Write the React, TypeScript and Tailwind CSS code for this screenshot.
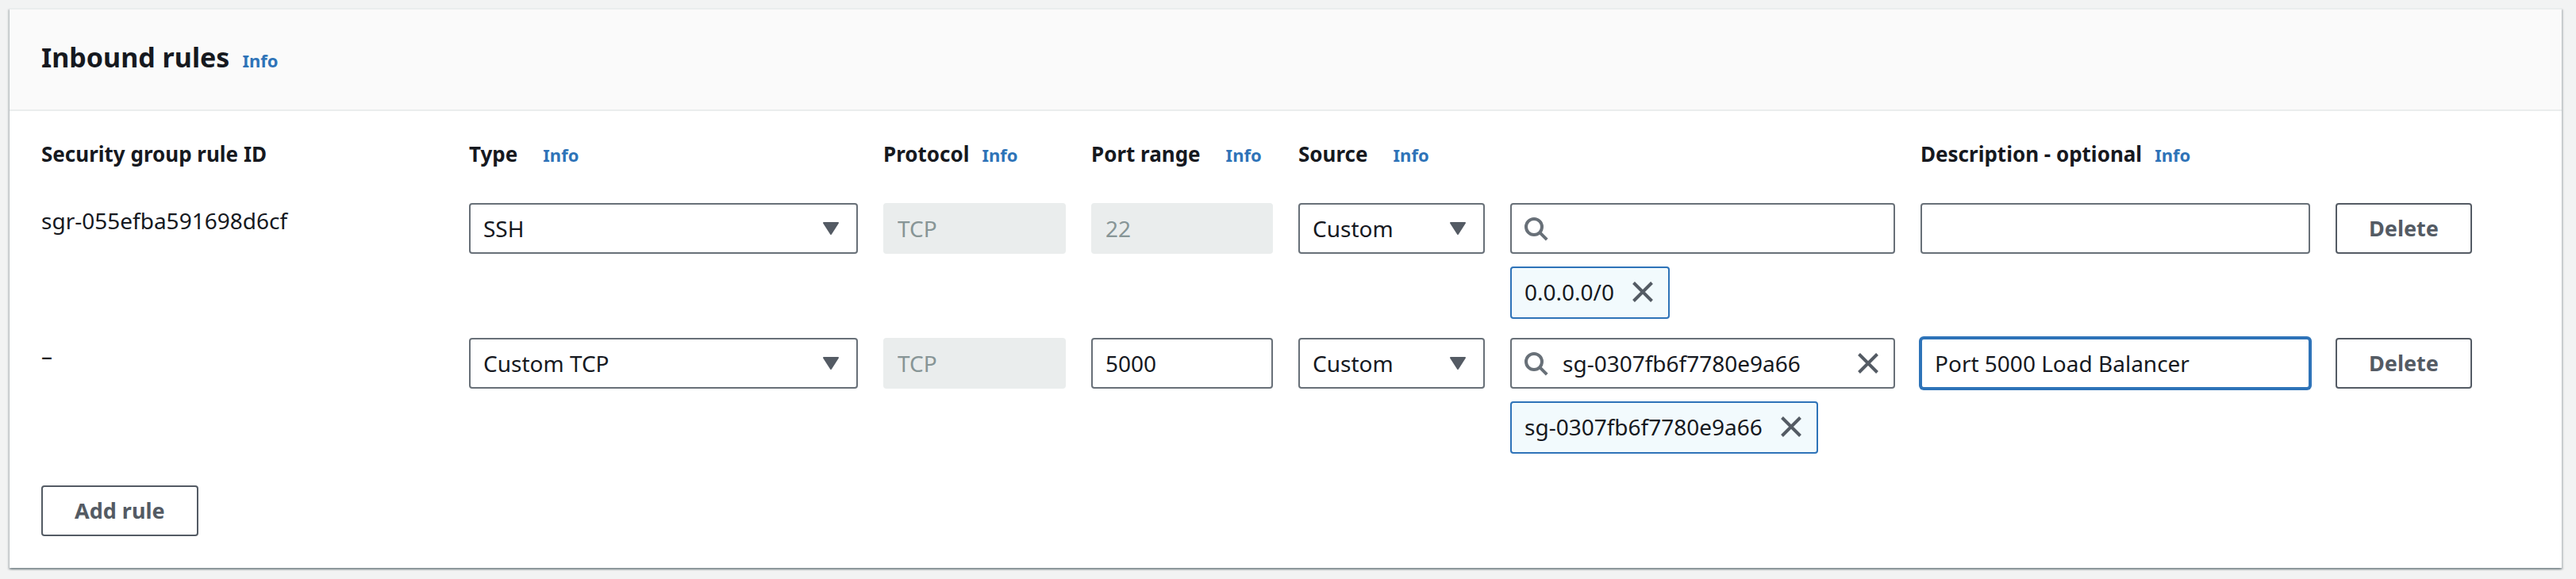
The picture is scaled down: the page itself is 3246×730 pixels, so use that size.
import type { ReactNode } from "react";

type Rule = {
  id: string;
  type: string;
  port: string;
  portLocked: boolean;
  source: string;
  query: string;
  token: string;
  description: string;
  focused: boolean;
};

const rules: Rule[] = [
  {
    id: "sgr-055efba591698d6cf",
    type: "SSH",
    port: "22",
    portLocked: true,
    source: "Custom",
    query: "",
    token: "0.0.0.0/0",
    description: "",
    focused: false,
  },
  {
    id: "–",
    type: "Custom TCP",
    port: "5000",
    portLocked: false,
    source: "Custom",
    query: "sg-0307fb6f7780e9a66",
    token: "sg-0307fb6f7780e9a66",
    description: "Port 5000 Load Balancer",
    focused: true,
  },
];

const rowGrid =
  "grid gap-x-8 grid-cols-[minmax(0,507fr)_minmax(0,490fr)_minmax(0,230fr)_minmax(0,229fr)_minmax(0,235fr)_minmax(0,485fr)_minmax(0,491fr)_minmax(0,245fr)]";

const fieldBase = "h-16 w-full min-w-0 rounded-sm border-2 px-4 text-[28px] leading-[40px] outline-none";
const fieldNormal = "border-[#687078] bg-white text-[#16191f]";
const fieldLocked = "border-[#eaeded] bg-[#eaeded] text-[#879596]";
const fieldFocused = "border-[#2e73b8] bg-white text-[#16191f] ring-2 ring-[#2e73b8]";

function InfoLink() {
  return (
    <a href="#info" className="text-[22px] leading-none font-bold text-[#2e73b8]">
      Info
    </a>
  );
}

function HeadCell({ id, children, info, wide }: { id: string; children: ReactNode; info?: boolean; wide?: boolean }) {
  return (
    <th
      scope="col"
      className={`flex items-baseline whitespace-nowrap text-left text-[26px] leading-[44px] font-bold ${wide ? "gap-8" : "gap-4"}`}
    >
      <span id={id}>{children}</span>
      {info && <InfoLink />}
    </th>
  );
}

function CloseIcon() {
  return (
    <svg viewBox="0 0 32 32" className="size-8" fill="none" stroke="#545b64" strokeWidth="4" aria-hidden="true">
      <path d="M4.5 4.5l23 23M27.5 4.5l-23 23" />
    </svg>
  );
}

function SearchIcon() {
  return (
    <svg viewBox="0 0 32 32" className="size-8 shrink-0" fill="none" stroke="#687078" strokeWidth="4" aria-hidden="true">
      <circle cx="12" cy="14" r="10" />
      <path d="M19.2 21.2l9 9" />
    </svg>
  );
}

function Select({ labelledBy, value }: { labelledBy: string; value: string }) {
  return (
    <div className="relative">
      <select
        aria-labelledby={labelledBy}
        defaultValue={value}
        className={`block appearance-none pr-14 ${fieldBase} ${fieldNormal}`}
      >
        <option>{value}</option>
      </select>
      <svg
        viewBox="0 0 20 16"
        className="pointer-events-none absolute top-6 right-6 h-4 w-5"
        fill="#545b64"
        stroke="#545b64"
        strokeWidth="2"
        strokeLinejoin="round"
        aria-hidden="true"
      >
        <path d="M1 1h18l-9 14z" />
      </svg>
    </div>
  );
}

function Button({ children }: { children: ReactNode }) {
  return (
    <button
      type="button"
      className="block h-16 rounded-sm border-2 border-[#545b64] bg-white px-10 text-[27px] leading-[40px] font-bold whitespace-nowrap text-[#545b64]"
    >
      {children}
    </button>
  );
}

function RuleRow({ rule }: { rule: Rule }) {
  return (
    <tr className={rowGrid}>
      <td className="text-[28px] leading-[44px]">{rule.id}</td>
      <td>
        <Select labelledBy="col-type" value={rule.type} />
      </td>
      <td>
        <input
          aria-labelledby="col-protocol"
          disabled
          defaultValue="TCP"
          className={`block ${fieldBase} ${fieldLocked}`}
        />
      </td>
      <td>
        <input
          aria-labelledby="col-port"
          disabled={rule.portLocked}
          defaultValue={rule.port}
          className={`block ${fieldBase} ${rule.portLocked ? fieldLocked : fieldNormal}`}
        />
      </td>
      <td>
        <Select labelledBy="col-source" value={rule.source} />
      </td>
      <td className="flex flex-col items-start gap-4">
        <div className="flex h-16 w-full items-center rounded-sm border-2 border-[#687078] bg-white px-4">
          <SearchIcon />
          <input
            aria-label="Search source"
            defaultValue={rule.query}
            className="ml-4 min-w-0 flex-1 text-[28px] leading-[40px] outline-none"
          />
          {rule.query && (
            <button type="button" aria-label="Clear search">
              <CloseIcon />
            </button>
          )}
        </div>
        <div className="flex items-center gap-5 rounded-sm border-2 border-[#2e73b8] bg-[#f2fafd] px-4 pt-2 pb-2.5 text-[28px] leading-[44px]">
          <span>{rule.token}</span>
          <button type="button" aria-label={`Remove ${rule.token}`}>
            <CloseIcon />
          </button>
        </div>
      </td>
      <td>
        <input
          aria-labelledby="col-description"
          defaultValue={rule.description}
          className={`block ${fieldBase} ${rule.focused ? fieldFocused : fieldNormal}`}
        />
      </td>
      <td>
        <Button>Delete</Button>
      </td>
    </tr>
  );
}

export default function App() {
  return (
    <main className="min-h-screen bg-[#f2f3f3] pt-2.5 pr-[18px] pb-3.5 pl-3 font-['Noto_Sans',sans-serif] text-[#16191f]">
      <section
        aria-labelledby="inbound-title"
        className="border-t-2 border-[#eaeded] bg-white shadow-[0_2px_2px_0_rgba(0,28,36,0.3),2px_2px_2px_0_rgba(0,28,36,0.15),-2px_2px_2px_0_rgba(0,28,36,0.15)]"
      >
        <header className="flex items-baseline gap-4 border-b-2 border-[#eaeded] bg-[#fafafa] px-10 pt-[38px] pb-11">
          <h2 id="inbound-title" className="text-[34px] leading-[44px] font-bold">
            Inbound rules
          </h2>
          <InfoLink />
        </header>
        <div className="px-10 pt-8 pb-10">
          <table className="block">
            <thead className="block">
              <tr className={rowGrid}>
                <HeadCell id="col-id">Security group rule ID</HeadCell>
                <HeadCell id="col-type" info wide>Type</HeadCell>
                <HeadCell id="col-protocol" info>Protocol</HeadCell>
                <HeadCell id="col-port" info wide>Port range</HeadCell>
                <HeadCell id="col-source" info wide>Source</HeadCell>
                <td />
                <HeadCell id="col-description" info>Description - optional</HeadCell>
                <td />
              </tr>
            </thead>
            <tbody className="mt-10 flex flex-col gap-6">
              {rules.map((rule) => (
                <RuleRow key={rule.id} rule={rule} />
              ))}
            </tbody>
          </table>
          <div className="mt-10">
            <Button>Add rule</Button>
          </div>
        </div>
      </section>
    </main>
  );
}
